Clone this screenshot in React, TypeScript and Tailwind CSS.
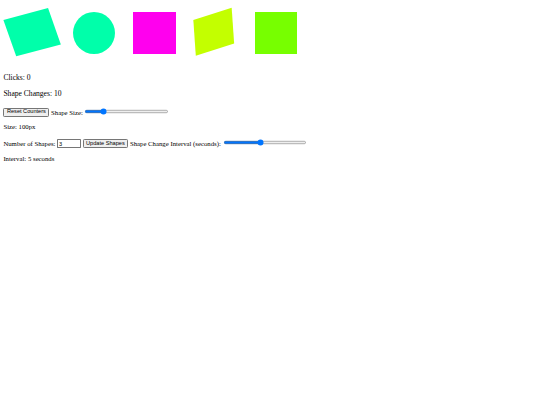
import { useState } from "react";

const shapes = [
  { color: "bg-[#00ffaa]", shape: "[transform:matrix(1.063,-0.281,0.305,0.866,-2,-2)]" },
  { color: "bg-[#00ffaa]", shape: "rounded-full" },
  { color: "bg-[#ff00ee]", shape: "" },
  { color: "bg-[#c3ff00]", shape: "[transform:matrix(0.913,-0.296,0.059,0.851,-3,-3)]" },
  { color: "bg-[#77ff00]", shape: "" },
];

const buttonClass =
  "h-[21px] shrink-0 rounded-[3px] border border-[#767676] bg-[#efefef] px-[6px] font-['Liberation_Sans',Arial,sans-serif] text-[13.333px] leading-none text-black";

export default function App() {
  const [clicks, setClicks] = useState(0);
  const [changes, setChanges] = useState(10);
  const [size, setSize] = useState(100);
  const [count, setCount] = useState("3");
  const [interval, setIntervalValue] = useState(5);

  return (
    <div className="min-h-[960px] bg-white p-2 font-['Liberation_Serif','Times_New_Roman',serif] text-base leading-[normal] text-black [zoom:0.421875]">
      <div className="flex h-[146px] items-start gap-[4px]">
        {shapes.map((s, i) => (
          <div
            key={i}
            onClick={() => setClicks(clicks + 1)}
            className={`m-5 h-[100px] w-[100px] shrink-0 ${s.color} ${s.shape}`}
          />
        ))}
      </div>

      <p className="my-[18px] text-[18px]">Clicks: {clicks}</p>
      <p className="my-[18px] text-[18px]">Shape Changes: {changes}</p>

      <div className="flex h-[26px] items-center gap-[4px] pt-[5px]">
        <button
          className={buttonClass}
          onClick={() => {
            setClicks(0);
            setChanges(0);
          }}
        >
          Reset Counters
        </button>
        <label>Shape Size:</label>
        <input
          type="range"
          min={50}
          max={300}
          value={size}
          onChange={(e) => setSize(Number(e.target.value))}
          className="mb-[4px] w-[200px]"
        />
      </div>

      <p className="my-4">Size: {size}px</p>

      <div className="flex h-[25px] items-center gap-[4px] pt-[5px]">
        <label>Number of Shapes:</label>
        <input
          type="number"
          value={count}
          onChange={(e) => setCount(e.target.value)}
          className="h-[21px] w-[56px] shrink-0 rounded-[2px] border border-[#767676] px-[2px] font-['Liberation_Sans',Arial,sans-serif] text-[13.333px]"
        />
        <button className={buttonClass}>Update Shapes</button>
        <label>Shape Change Interval (seconds):</label>
        <input
          type="range"
          min={1}
          max={10}
          value={interval}
          onChange={(e) => setIntervalValue(Number(e.target.value))}
          className="mb-[4px] w-[200px]"
        />
      </div>

      <p className="my-4">Interval: {interval} seconds</p>
    </div>
  );
}
